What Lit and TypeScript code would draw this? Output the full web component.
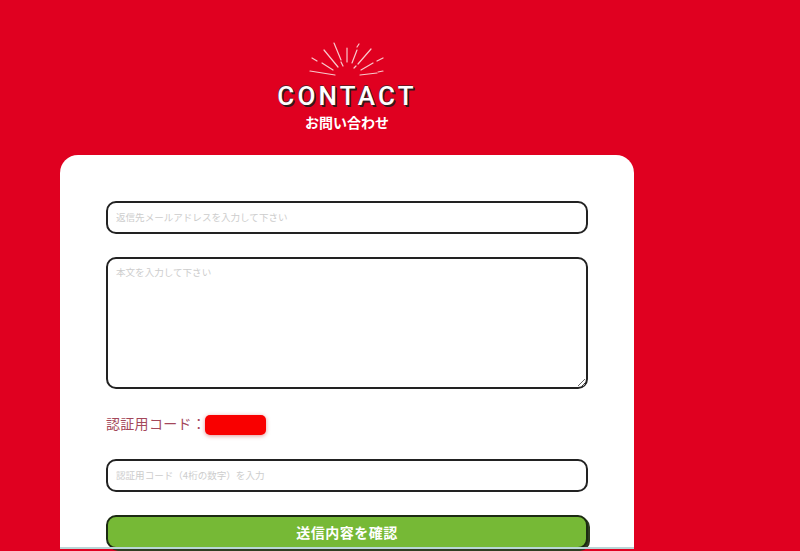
import { LitElement, html, css, svg } from "lit";
import { customElement } from "lit/decorators.js";

const rays: [number, number, number, number][] = [
  [310, 71, 335, 75], [312, 58, 317, 61], [322, 63, 333, 70], [324, 50, 338, 67],
  [334, 43, 341, 60], [341, 62, 343, 66], [347, 48, 347, 62], [359, 44, 357, 47],
  [357, 50, 352, 63], [371, 49, 358, 64], [356, 66, 354, 68], [373, 63, 361, 70],
  [383, 58, 377, 61], [360, 75, 377, 73], [378, 72, 383, 71],
];

@customElement("app-root")
export class AppRoot extends LitElement {
  static styles = css`
    :host {
      display: flex;
      flex-direction: column;
      width: 800px;
      height: 551px;
      overflow: hidden;
      background: #e00020;
      font-family: "Noto Sans CJK JP", "Liberation Sans", sans-serif;
    }
    .page {
      width: 574px;
      margin-left: 60px;
      flex: none;
      display: flex;
      flex-direction: column;
      align-items: center;
    }
    .head {
      height: 155px;
      width: 100%;
      display: flex;
      flex-direction: column;
      align-items: center;
      box-sizing: border-box;
      padding-top: 81px;
    }
    .burst {
      position: absolute;
      left: 300px;
      top: 36px;
      width: 90px;
      height: 45px;
    }
    .title {
      font-family: "Roboto", "Liberation Sans", sans-serif;
      font-size: 26px;
      font-weight: 500;
      line-height: 30px;
      letter-spacing: 3.2px;
      color: #fff;
      text-shadow: 1px 1px 0 #33191c, 1.5px 1.5px 0.5px #33191c, -0.7px -0.7px 0.5px #6a1a24;
    }
    .sub {
      font-size: 14px;
      font-weight: 700;
      line-height: 18px;
      margin-top: 2px;
      color: #fff;
    }
    .card {
      width: 100%;
      height: 394px;
      box-sizing: border-box;
      background: #fff;
      border-radius: 18px 18px 0 0;
      padding: 46px 46px 0;
      display: flex;
      flex-direction: column;
    }
    .field {
      box-sizing: border-box;
      width: 482px;
      height: 33px;
      flex: none;
      border: 2px solid #222;
      border-radius: 10px;
      padding: 0 8px 2px;
      margin: 0;
      outline: none;
      background: #fff;
      font: 400 9.55px "Noto Sans CJK JP", sans-serif;
      color: #333;
    }
    .field::placeholder { color: #cdcdcd; opacity: 1; }
    textarea.field {
      display: block;
      height: 132px;
      margin-top: 23px;
      padding-top: 6px;
      resize: vertical;
    }
    .code {
      display: flex;
      align-items: center;
      flex: none;
      height: 20px;
      line-height: 20px;
      margin-top: 24px;
      color: #a4475a;
      font-size: 14px;
      letter-spacing: 0.3px;
    }
    .chip {
      width: 61px;
      height: 20px;
      align-self: flex-start;
      margin-left: -1px;
      margin-top: 2px;
      border-radius: 5px;
      background: #f90000;
      box-shadow: 0 1px 4px rgba(200, 60, 60, 0.55);
    }
    .code + .field { margin-top: 26px; }
    .send {
      box-sizing: border-box;
      width: 482px;
      height: 34px;
      flex: none;
      margin-top: 23px;
      border: 2px solid #1c2a12;
      border-radius: 10px;
      background: #76b936;
      box-shadow: 2px 2px 0 #2f3d22;
      color: #fff;
      font: 700 14px "Noto Sans CJK JP", sans-serif;
      letter-spacing: 0.5px;
      padding: 0;
    }
    .strip {
      height: 2px;
      width: 574px;
      margin: -2px 0 0 60px;
      flex: none;
      background: #b9d6d6;
      position: relative;
    }
  `;

  render() {
    return html`
      <svg class="burst" viewBox="300 36 90 45" fill="none" stroke="#f8c9cd" stroke-width="1.2" stroke-linecap="round">
        ${rays.map(([a, b, c, d]) => svg`<line x1=${a} y1=${b} x2=${c} y2=${d}></line>`)}
      </svg>
      <div class="page">
        <header class="head">
          <div class="title">CONTACT</div>
          <div class="sub">お問い合わせ</div>
        </header>
        <form class="card">
          <input class="field" placeholder="返信先メールアドレスを入力して下さい" />
          <textarea class="field" placeholder="本文を入力して下さい"></textarea>
          <div class="code">認証用コード：<span class="chip"></span></div>
          <input class="field" placeholder="認証用コード（4桁の数字）を入力" />
          <button class="send" type="button">送信内容を確認</button>
        </form>
      </div>
      <div class="strip"></div>
    `;
  }
}
